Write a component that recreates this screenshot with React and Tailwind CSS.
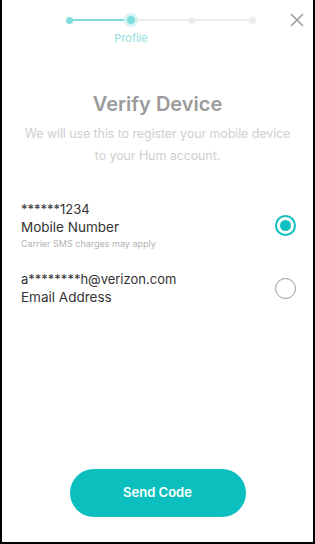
import React, { useState } from 'react'

export default function App() {
  const [method, setMethod] = useState('phone')

  return (
    <div
      className="w-[315px] h-[544px] bg-white border-x-2 border-b-2 border-black flex flex-col"
      style={{ fontFamily: 'Inter, "Liberation Sans", sans-serif' }}
    >
      {/* Progress */}
      <div className="relative h-[50px] shrink-0">
        <div className="absolute left-[64px] top-[13px] w-[190px] h-[14px] flex items-center">
          <div className="absolute left-[3px] right-[3px] h-[2px] bg-[#ececec]" />
          <div className="absolute left-[3px] w-[62px] h-[2px] bg-[#7fdcdc]" />
          <div className="relative flex w-full justify-between items-center">
            <span className="w-[7px] h-[7px] rounded-full bg-[#7fdcdc]" />
            <span className="w-[14px] h-[14px] -mx-[3px] rounded-full bg-[#d6f4f4] flex items-center justify-center">
              <span className="w-[8px] h-[8px] rounded-full bg-[#7fdcdc]" />
            </span>
            <span className="w-[7px] h-[7px] rounded-full bg-[#ececec]" />
            <span className="w-[7px] h-[7px] rounded-full bg-[#ececec]" />
          </div>
        </div>
        <div className="absolute left-[109px] w-[40px] top-[30px] text-center text-[11px] text-[#8fdede]">Profile</div>
        <button className="absolute right-[8px] top-[12px] w-[16px] h-[16px] flex items-center justify-center">
          <svg width="14" height="14" viewBox="0 0 14 14" stroke="#9a9a9a" strokeWidth="1.5" fill="none">
            <path d="M1 1 L13 13 M13 1 L1 13" />
          </svg>
        </button>
      </div>

      {/* Heading */}
      <div className="mt-[41px] text-center">
        <h1 className="text-[20px] leading-[26px] font-semibold text-[#9b9b9b]">Verify Device</h1>
        <p className="mt-[6px] text-[12.5px] leading-[22px] text-[#cfcfcf] whitespace-nowrap tracking-[-0.1px]">
          We will use this to register your mobile device
          <br />
          to your Hum account.
        </p>
      </div>

      {/* Options */}
      <div className="mt-[33px] pl-[19px] pr-[17px] flex flex-col gap-[20px]">
        <button
          onClick={() => setMethod('phone')}
          className="flex items-center justify-between text-left"
        >
          <div>
            <div className="text-[13px] leading-[18px] text-[#333]">******1234</div>
            <div className="text-[13.5px] leading-[18px] text-[#333]">Mobile Number</div>
            <div className="mt-[2px] text-[9px] leading-[12px] text-[#b3b3b3]">Carrier SMS charges may apply</div>
          </div>
          <Radio checked={method === 'phone'} />
        </button>
        <button
          onClick={() => setMethod('email')}
          className="flex items-center justify-between text-left"
        >
          <div>
            <div className="text-[13px] leading-[18px] text-[#333]">a********h@verizon.com</div>
            <div className="text-[13.5px] leading-[18px] text-[#333]">Email Address</div>
          </div>
          <Radio checked={method === 'email'} />
        </button>
      </div>

      <div className="flex-1" />

      <div className="flex justify-center pb-[25px]">
        <button className="w-[176px] h-[48px] rounded-full bg-[#0bbfbf] text-white text-[13px] font-semibold">
          Send Code
        </button>
      </div>
    </div>
  )
}

function Radio({ checked }) {
  return checked ? (
    <span className="w-[21px] h-[21px] rounded-full border-2 border-[#10bfbf] flex items-center justify-center">
      <span className="w-[11px] h-[11px] rounded-full bg-[#10bfbf]" />
    </span>
  ) : (
    <span className="w-[21px] h-[21px] rounded-full border-[1.5px] border-[#999]" />
  )
}
